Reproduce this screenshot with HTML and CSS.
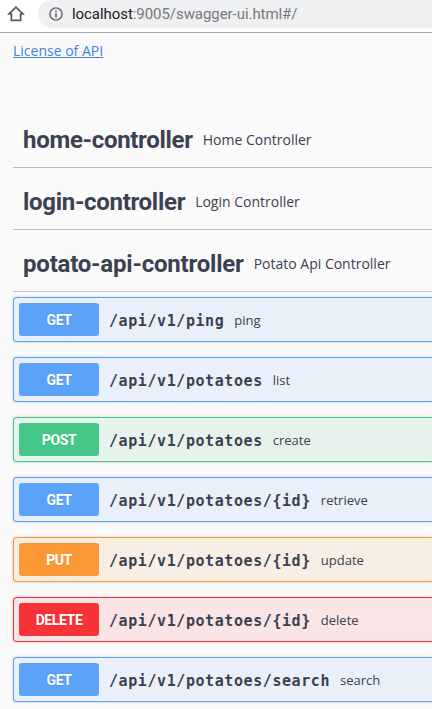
FILE: index.html
```html
<!DOCTYPE html>
<html lang="en">
<head>
<meta charset="utf-8">
<title>Swagger UI</title>
<link rel="stylesheet" href="styles.css">
</head>
<body>
<header class="toolbar">
  <svg class="home" width="18" height="18" viewBox="0 0 18 18"><path d="M9 2.1 2.1 9H4.4V15.4H7.3V15.4H13.6V9H15.9Z" fill="none" stroke="#55585c" stroke-width="1.7"/></svg>
  <div class="address">
    <svg class="info" width="14" height="14" viewBox="0 0 14 14"><circle cx="7" cy="7" r="6.1" fill="none" stroke="#5f6368" stroke-width="1.4"/><path d="M7 6.2V10.4M7 3.5V5" stroke="#5f6368" stroke-width="1.5"/></svg>
    <span class="url"><span class="host">localhost</span>:9005/swagger-ui.html#/</span>
  </div>
</header>
<main>
  <a class="license" href="#">License of API</a>
  <section class="tags">
    <h2 class="tag"><span class="name">home-controller</span><small>Home Controller</small></h2>
    <h2 class="tag"><span class="name">login-controller</span><small>Login Controller</small></h2>
    <h2 class="tag"><span class="name potato-name">potato-api-controller</span><small>Potato Api Controller</small></h2>
  </section>
  <section class="operations">
    <div class="op get"><span class="method">GET</span><span class="path">/api/v1/ping</span><span class="summary">ping</span></div>
    <div class="op get"><span class="method">GET</span><span class="path">/api/v1/potatoes</span><span class="summary">list</span></div>
    <div class="op post"><span class="method">POST</span><span class="path">/api/v1/potatoes</span><span class="summary">create</span></div>
    <div class="op get"><span class="method">GET</span><span class="path">/api/v1/potatoes/{id}</span><span class="summary">retrieve</span></div>
    <div class="op put"><span class="method">PUT</span><span class="path">/api/v1/potatoes/{id}</span><span class="summary">update</span></div>
    <div class="op delete"><span class="method">DELETE</span><span class="path">/api/v1/potatoes/{id}</span><span class="summary">delete</span></div>
    <div class="op get"><span class="method">GET</span><span class="path">/api/v1/potatoes/search</span><span class="summary">search</span></div>
  </section>
</main>
</body>
</html>
```
FILE: styles.css
```css
* { box-sizing: border-box; }
body { margin: 0; height: 709px; overflow: hidden; background: #fafafa; color: #3b4151; font-family: "Open Sans", sans-serif; }
.toolbar { display: flex; align-items: flex-start; height: 33px; background: #fff; border-bottom: 1px solid #a6a7a8; }
.home { flex: none; margin: 5px 0 0 7px; }
.address { display: flex; align-items: center; flex: 1; height: 28px; margin-left: 13px; padding-left: 11px; background: #eff0f2; border-radius: 14px 0 0 14px; }
.info { flex: none; margin-right: 9px; }
.url { font: 15px/28px Roboto, sans-serif; color: #75797e; white-space: nowrap; letter-spacing: -0.06px; }
.host { color: #202124; }
main { padding-left: 13px; }
.license { display: block; width: max-content; margin-top: 8px; font-size: 14px; line-height: 20px; color: #3f82dc; }
.tags { margin-top: 45px; }
.tag { display: flex; align-items: center; height: 62px; margin: 0; padding: 6px 0 0 10px; border-bottom: 1px solid #bcbdc2; font-weight: 400; white-space: nowrap; }
.name { font: 700 24px/34px Roboto, sans-serif; letter-spacing: -0.3px; }
.potato-name { letter-spacing: -0.21px; }
small { margin-left: 10px; font-size: 14px; line-height: 20px; }
.operations { margin-top: 5px; }
.op { display: flex; align-items: center; height: 45px; margin-bottom: 15px; padding-left: 5px; border: 1px solid var(--tone); border-right: 0; border-radius: 4px 0 0 4px; background: var(--tint); box-shadow: 0 0 3px rgba(0,0,0,.19); white-space: nowrap; }
.method { width: 80px; height: 33px; border-radius: 3px; background: var(--tone); color: #fff; font: 700 14px/34px Roboto, sans-serif; letter-spacing: -0.4px; text-align: center; text-shadow: 0 1px 0 rgba(0,0,0,.1); }
.path { margin-left: 10px; padding-top: 3px; font: 700 15px/22px "DejaVu Sans Mono", monospace; letter-spacing: 0.58px; }
.summary { margin-left: 10px; font-size: 13px; line-height: 20px; }
.get { --tone: #5ba2f9; --tint: #e9f0fa; }
.post { --tone: #44c787; --tint: #e6f3ec; }
.put { --tone: #fc9735; --tint: #f9eee4; }
.delete { --tone: #f83338; --tint: #f9e4e6; }
```
